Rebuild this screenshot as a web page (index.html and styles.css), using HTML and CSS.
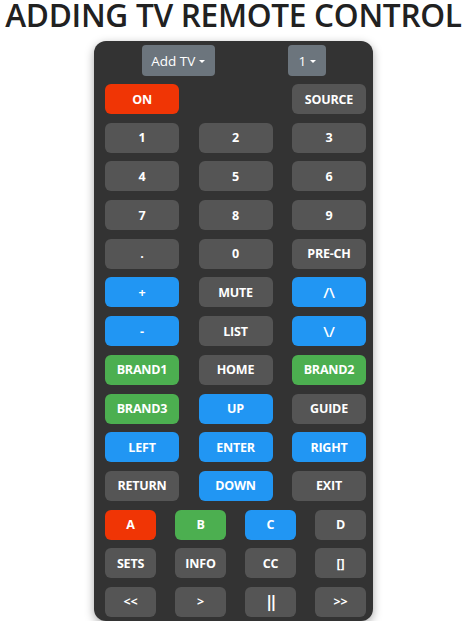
FILE: index.html
```html
<!DOCTYPE html>
<html>
<head>
<meta charset="utf-8">
<link rel="stylesheet" href="styles.css">
</head>
<body>
<div class="page">
  <h1 class="title">ADDING TV REMOTE CONTROL</h1>
  <div class="remote">
    <div class="top-row">
      <button class="dd dd-tv">Add TV <span class="caret"></span></button>
      <button class="dd dd-num">1 <span class="caret"></span></button>
    </div>
    <div class="grid3">
      <button class="btn red">ON</button>
      <span></span>
      <button class="btn">SOURCE</button>
      <button class="btn">1</button>
      <button class="btn">2</button>
      <button class="btn">3</button>
      <button class="btn">4</button>
      <button class="btn">5</button>
      <button class="btn">6</button>
      <button class="btn">7</button>
      <button class="btn">8</button>
      <button class="btn">9</button>
      <button class="btn">.</button>
      <button class="btn">0</button>
      <button class="btn">PRE-CH</button>
      <button class="btn blue">+</button>
      <button class="btn">MUTE</button>
      <button class="btn blue big">/\</button>
      <button class="btn blue">-</button>
      <button class="btn">LIST</button>
      <button class="btn blue big">\/</button>
      <button class="btn green">BRAND1</button>
      <button class="btn">HOME</button>
      <button class="btn green">BRAND2</button>
      <button class="btn green">BRAND3</button>
      <button class="btn blue">UP</button>
      <button class="btn">GUIDE</button>
      <button class="btn blue">LEFT</button>
      <button class="btn blue">ENTER</button>
      <button class="btn blue">RIGHT</button>
      <button class="btn">RETURN</button>
      <button class="btn blue">DOWN</button>
      <button class="btn">EXIT</button>
    </div>
    <div class="grid4">
      <button class="btn red">A</button>
      <button class="btn green">B</button>
      <button class="btn blue">C</button>
      <button class="btn">D</button>
      <button class="btn">SETS</button>
      <button class="btn">INFO</button>
      <button class="btn">CC</button>
      <button class="btn">[]</button>
      <button class="btn">&lt;&lt;</button>
      <button class="btn">&gt;</button>
      <button class="btn bars">||</button>
      <button class="btn">&gt;&gt;</button>
    </div>
  </div>
</div>
</body>
</html>
```
FILE: styles.css
```css
* { box-sizing: border-box; }
html, body {
  margin: 0;
  padding: 0;
  background: #fff;
}
body {
  font-family: "Open Sans", "Noto Sans", sans-serif;
}
.page {
  width: 467px;
  display: flex;
  flex-direction: column;
  align-items: center;
}
.title {
  margin: 0;
  font-size: 31.6px;
  font-weight: 600;
  color: #212121;
  line-height: 30px;
  white-space: nowrap;
  letter-spacing: -0.3px;
}
.remote {
  margin-top: 11px;
  width: 279px;
  background: #333333;
  border-radius: 12px;
  box-shadow: 0 3px 10px rgba(0,0,0,0.35);
  padding: 4px 7px 4px 11px;
}
.top-row {
  display: flex;
  justify-content: space-around;
  margin-bottom: 8px;
  padding-right: 3px;
}
.dd {
  height: 31px;
  border: none;
  border-radius: 4px;
  background: #6c757d;
  color: #fff;
  font-family: inherit;
  font-size: 13.5px;
  padding: 0;
  display: flex;
  align-items: center;
  gap: 4px;
  white-space: nowrap;
}
.dd-tv { width: 73px; justify-content: center; }
.dd-num { width: 38px; justify-content: center; }
.caret {
  width: 0;
  height: 0;
  border-left: 3.5px solid transparent;
  border-right: 3.5px solid transparent;
  border-top: 3.5px solid #fff;
  margin-top: 1px;
}
.grid3 {
  display: grid;
  grid-template-columns: 74px 74px 74px;
  column-gap: 19.5px;
  row-gap: 8.7px;
  margin-bottom: 8.7px;
}
.grid4 {
  display: grid;
  grid-template-columns: repeat(4, 51px);
  column-gap: 19px;
  row-gap: 8.7px;
}
.btn {
  height: 30px;
  border: none;
  border-radius: 6px;
  background: #555555;
  color: #fff;
  font-family: inherit;
  font-weight: 700;
  font-size: 12.5px;
  padding: 0;
  display: flex;
  align-items: center;
  justify-content: center;
  letter-spacing: -0.2px;
}
.red { background: #f03505; }
.blue { background: #2196f3; }
.green { background: #4caf50; }
.big { font-size: 15px; font-weight: 600; }
.bars { font-family: "DejaVu Sans", sans-serif; font-size: 16px; letter-spacing: -1.5px; font-weight: 700; }
```
